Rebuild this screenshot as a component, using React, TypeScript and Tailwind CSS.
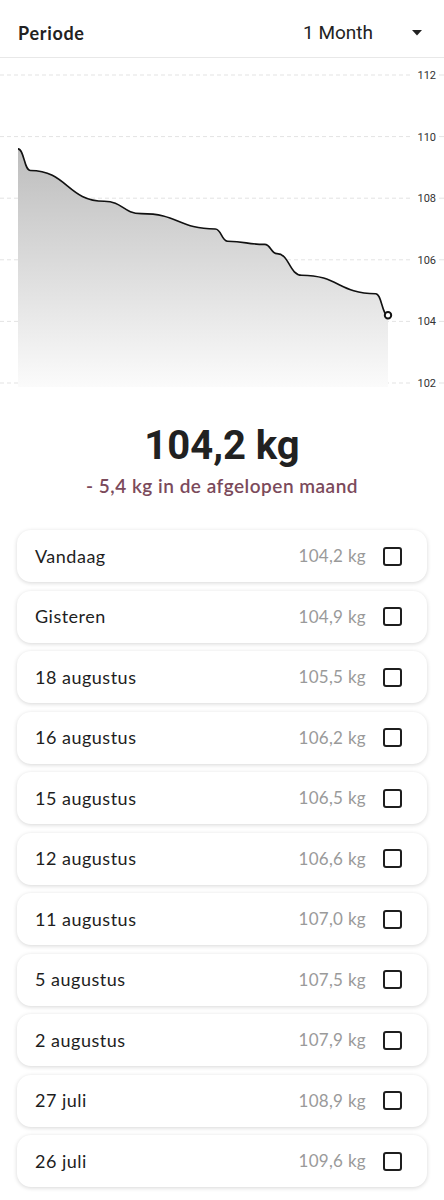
import React from "react";

type Entry = { label: string; day: number; kg: number };

const entries: Entry[] = [
  { label: "Vandaag", day: 30, kg: 104.2 },
  { label: "Gisteren", day: 29, kg: 104.9 },
  { label: "18 augustus", day: 23, kg: 105.5 },
  { label: "16 augustus", day: 21, kg: 106.2 },
  { label: "15 augustus", day: 20, kg: 106.5 },
  { label: "12 augustus", day: 17, kg: 106.6 },
  { label: "11 augustus", day: 16, kg: 107.0 },
  { label: "5 augustus", day: 10, kg: 107.5 },
  { label: "2 augustus", day: 7, kg: 107.9 },
  { label: "27 juli", day: 1, kg: 108.9 },
  { label: "26 juli", day: 0, kg: 109.6 },
];

const fmt = (n: number) => n.toFixed(1).replace(".", ",") + " kg";

// chart geometry (svg coords, top of svg = page y 58)
const X0 = 18;
const PX_DAY = 370 / 30;
const Y112 = 17;
const PX_KG = 30.8;
const xOf = (d: number) => X0 + d * PX_DAY;
const yOf = (v: number) => Y112 + (112 - v) * PX_KG;

// horizontal tangent at every point (like d3.curveBumpX)
function bumpPath(pts: [number, number][]) {
  let d = `M${pts[0][0]},${pts[0][1]}`;
  for (let i = 1; i < pts.length; i++) {
    const [x0, y0] = pts[i - 1];
    const [x1, y1] = pts[i];
    const mx = (x0 + x1) / 2;
    d += `C${mx},${y0},${mx},${y1},${x1},${y1}`;
  }
  return d;
}

function Chart() {
  const pts = [...entries]
    .sort((a, b) => a.day - b.day)
    .map((e) => [xOf(e.day), yOf(e.kg)] as [number, number]);
  const line = bumpPath(pts);
  const last = pts[pts.length - 1];
  const bottom = 329;
  const area = `${line}L${last[0]},${bottom}L${pts[0][0]},${bottom}Z`;
  const ticks = [112, 110, 108, 106, 104, 102];

  return (
    <svg width="444" height="337" viewBox="0 0 444 337" className="block">
      <defs>
        <linearGradient id="fill" x1="0" y1="0" x2="0" y2="1" gradientUnits="objectBoundingBox">
          <stop offset="0" stopColor="#bdbdbd" />
          <stop offset="1" stopColor="#fbfbfb" />
        </linearGradient>
      </defs>
      {ticks.map((v) => (
        <g key={v}>
          <line x1="0" x2="411" y1={yOf(v)} y2={yOf(v)} stroke="#e3e3e3" strokeWidth="1" strokeDasharray="4 3" />
          <line x1="439" x2="444" y1={yOf(v)} y2={yOf(v)} stroke="#e3e3e3" strokeWidth="1" />
          <text
            x="436"
            y={yOf(v) + 4}
            textAnchor="end"
            fontSize="11"
            fill="#333"
            fontFamily="Roboto, sans-serif"
          >
            {v}
          </text>
        </g>
      ))}
      <path d={area} fill="url(#fill)" />
      <path d={line} fill="none" stroke="#111" strokeWidth="1.6" />
      <circle cx={last[0]} cy={last[1]} r="3.2" fill="#fff" stroke="#111" strokeWidth="2" />
    </svg>
  );
}

export default function App() {
  return (
    <div className="min-h-[1200px] w-[444px] bg-white">
      <div className="flex h-[58px] items-center border-b border-[#e8e8e8] pt-[9px] pl-[18px] pr-[22px]">
        <span className="flex-1 text-[18px] font-bold tracking-[0.7px] text-[#222] [font-family:Lato,sans-serif]">
          Periode
        </span>
        <span className="mr-[39px] text-[19px] text-[#222] [font-family:Roboto,sans-serif]">1 Month</span>
        <svg width="10" height="6" viewBox="0 0 10 6">
          <path d="M0 0H10L5 5.5Z" fill="#222" />
        </svg>
      </div>

      <Chart />

      <div className="mt-[27px] text-center text-[40px] leading-[48px] font-bold text-[#212121] [font-family:Roboto,sans-serif]">
        104,2 kg
      </div>
      <div className="mt-[4px] text-center text-[19px] leading-[24px] font-semibold tracking-[0.5px] text-[#7b4a5b] [font-family:Lato,sans-serif]">
        - 5,4 kg in de afgelopen maand
      </div>

      <ul className="mt-[32px] flex flex-col gap-[8.5px] px-[17px]">
        {entries.map((e) => (
          <li
            key={e.label}
            className="flex h-[52px] items-center rounded-[14px] bg-white pl-[18px] pr-[25px] shadow-[0_1px_4px_rgba(0,0,0,0.16)]"
          >
            <span className="flex-1 text-[18px] tracking-[0.5px] text-[#1e1e1e] [font-family:Lato,sans-serif]">
              {e.label}
            </span>
            <span className="mr-[17px] text-[17px] tracking-[0.3px] text-[#9a9a9a] [font-family:Lato,sans-serif]">
              {fmt(e.kg)}
            </span>
            <span className="h-[19px] w-[19px] rounded-[3px] border-2 border-[#1e1e1e]" />
          </li>
        ))}
      </ul>
    </div>
  );
}
